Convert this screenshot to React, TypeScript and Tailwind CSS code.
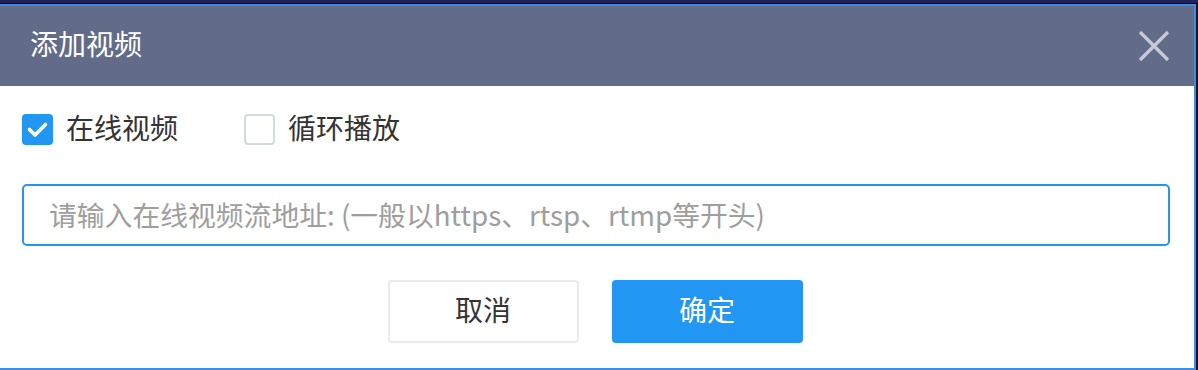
import React from "react";

const font = { fontFamily: '"Liberation Sans", "Noto Sans CJK SC", sans-serif' };
const cjk = { fontFamily: '"Noto Sans CJK SC", sans-serif' };

export default function App() {
  return (
    <div className="w-[1198px] h-[370px] bg-[#141720] overflow-hidden flex flex-col" style={font}>
      <div className="h-[3px] bg-[#1c2457] shrink-0" />
      <div className="h-px bg-black shrink-0" />
      <div className="w-[1196px] h-[366px] border-y-2 border-r-2 border-[#3b8ce8] bg-white flex flex-col shrink-0">
        <div className="h-[80px] bg-[#626c89] flex items-center justify-between pl-[30px] pr-[24px] shrink-0">
          <span className="text-[28px] text-white leading-none">添加视频</span>
          <svg width="32" height="32" viewBox="0 0 32 32" className="block">
            <path d="M2 2 L30 30 M30 2 L2 30" stroke="#c6cad5" strokeWidth="3.2" strokeLinecap="butt" />
          </svg>
        </div>
        <div className="flex flex-col px-[22px]">
          <div className="mt-[28px] h-[31px] flex items-center">
            <label className="flex items-center">
              <span className="w-[31px] h-[31px] rounded-[4px] bg-[#2196f3] flex items-center justify-center">
                <svg width="31" height="31" viewBox="0 0 31 31">
                  <path d="M7.5 15.5 L13 21 L23.5 10.5" fill="none" stroke="white" strokeWidth="3.6" strokeLinecap="round" strokeLinejoin="round" />
                </svg>
              </span>
              <span className="ml-[13px] text-[28px] leading-none text-[#333]">在线视频</span>
            </label>
            <label className="flex items-center ml-[66px]">
              <span className="w-[31px] h-[31px] rounded-[4px] border-2 border-[#d3dbe0] bg-white" />
              <span className="ml-[13px] text-[28px] leading-none text-[#333]">循环播放</span>
            </label>
          </div>
          <div className="mt-[39px] w-[1148px] h-[62px] border-2 border-[#2196f3] rounded-[5px] flex items-center pl-[25px]">
            <span className="text-[27.8px] leading-none text-[#9e9e9e]" style={cjk}>请输入在线视频流地址: (一般以https、rtsp、rtmp等开头)</span>
          </div>
          <div className="mt-[34px] flex justify-center gap-[33px] pr-[4px]">
            <button className="w-[191px] h-[63px] border-2 border-[#ebebeb] rounded-[4px] bg-white text-[28px] text-[#333] flex items-center justify-center">
              取消
            </button>
            <button className="w-[191px] h-[63px] rounded-[4px] bg-[#2196f3] text-[28px] text-white flex items-center justify-center">
              确定
            </button>
          </div>
        </div>
      </div>
    </div>
  );
}
